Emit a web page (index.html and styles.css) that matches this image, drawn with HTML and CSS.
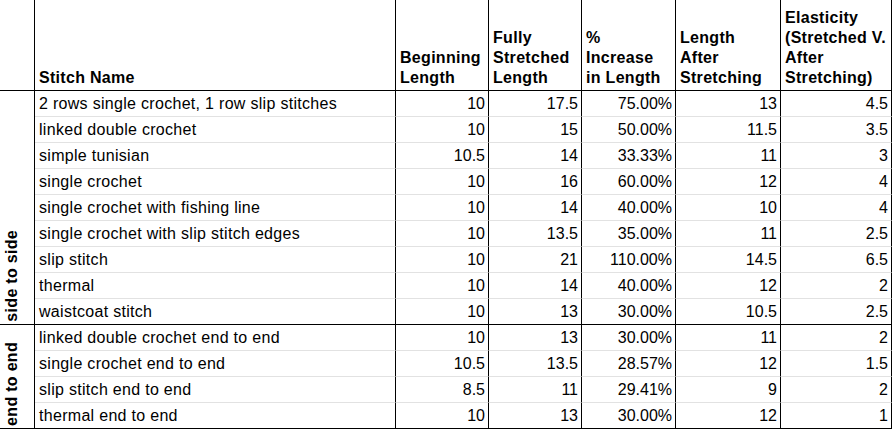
FILE: index.html
```html
<!DOCTYPE html>
<html lang="en">
<head>
<meta charset="utf-8">
<title>Stitch elasticity</title>
<link rel="stylesheet" href="styles.css">
</head>
<body>
<div class="sheet">
  <div class="row head">
    <div class="cell"></div>
    <div class="cell">Stitch Name</div>
    <div class="cell">Beginning<br>Length</div>
    <div class="cell">Fully<br>Stretched<br>Length</div>
    <div class="cell">%<br>Increase<br>in Length</div>
    <div class="cell">Length<br>After<br>Stretching</div>
    <div class="cell">Elasticity<br>(Stretched V.<br>After<br>Stretching)</div>
  </div>

  <div class="group g1"><span class="vtext">side to side</span></div>
  <div class="row"><div class="cell">2 rows single crochet, 1 row slip stitches</div><div class="cell num">10</div><div class="cell num">17.5</div><div class="cell num">75.00%</div><div class="cell num">13</div><div class="cell num">4.5</div></div>
  <div class="row"><div class="cell">linked double crochet</div><div class="cell num">10</div><div class="cell num">15</div><div class="cell num">50.00%</div><div class="cell num">11.5</div><div class="cell num">3.5</div></div>
  <div class="row"><div class="cell">simple tunisian</div><div class="cell num">10.5</div><div class="cell num">14</div><div class="cell num">33.33%</div><div class="cell num">11</div><div class="cell num">3</div></div>
  <div class="row"><div class="cell">single crochet</div><div class="cell num">10</div><div class="cell num">16</div><div class="cell num">60.00%</div><div class="cell num">12</div><div class="cell num">4</div></div>
  <div class="row"><div class="cell">single crochet with fishing line</div><div class="cell num">10</div><div class="cell num">14</div><div class="cell num">40.00%</div><div class="cell num">10</div><div class="cell num">4</div></div>
  <div class="row"><div class="cell">single crochet with slip stitch edges</div><div class="cell num">10</div><div class="cell num">13.5</div><div class="cell num">35.00%</div><div class="cell num">11</div><div class="cell num">2.5</div></div>
  <div class="row"><div class="cell">slip stitch</div><div class="cell num">10</div><div class="cell num">21</div><div class="cell num">110.00%</div><div class="cell num">14.5</div><div class="cell num">6.5</div></div>
  <div class="row"><div class="cell">thermal</div><div class="cell num">10</div><div class="cell num">14</div><div class="cell num">40.00%</div><div class="cell num">12</div><div class="cell num">2</div></div>
  <div class="row end"><div class="cell">waistcoat stitch</div><div class="cell num">10</div><div class="cell num">13</div><div class="cell num">30.00%</div><div class="cell num">10.5</div><div class="cell num">2.5</div></div>

  <div class="group g2"><span class="vtext">end to end</span></div>
  <div class="row"><div class="cell">linked double crochet end to end</div><div class="cell num">10</div><div class="cell num">13</div><div class="cell num">30.00%</div><div class="cell num">11</div><div class="cell num">2</div></div>
  <div class="row"><div class="cell">single crochet end to end</div><div class="cell num">10.5</div><div class="cell num">13.5</div><div class="cell num">28.57%</div><div class="cell num">12</div><div class="cell num">1.5</div></div>
  <div class="row"><div class="cell">slip stitch end to end</div><div class="cell num">8.5</div><div class="cell num">11</div><div class="cell num">29.41%</div><div class="cell num">9</div><div class="cell num">2</div></div>
  <div class="row end"><div class="cell">thermal end to end</div><div class="cell num">10</div><div class="cell num">13</div><div class="cell num">30.00%</div><div class="cell num">12</div><div class="cell num">1</div></div>
</div>
</body>
</html>
```

FILE: styles.css
```css
html, body {
  margin: 0;
  padding: 0;
  background: #ffffff;
}

body {
  font-family: "Liberation Sans", Arial, sans-serif;
  font-size: 16px;
  line-height: 20px;
  color: #000000;
}

.sheet {
  display: grid;
  grid-template-columns: 35px 361px 93px 93px 94px 105px 111px;
  grid-template-rows: 91px repeat(13, 26px);
}

.row {
  display: contents;
}

.cell {
  box-sizing: border-box;
  display: flex;
  align-items: flex-end;
  padding: 0 3px 2px 4px;
  border-right: 1px solid #000000;
  border-bottom: 1px solid #e2e2e2;
  white-space: nowrap;
  overflow: hidden;
  letter-spacing: 0.3px;
}

.num {
  justify-content: flex-end;
  letter-spacing: 0;
}

.head .cell {
  font-weight: bold;
  border-bottom-color: #000000;
}

.row.end .cell {
  border-bottom-color: #000000;
}

.group {
  box-sizing: border-box;
  display: flex;
  flex-direction: column;
  justify-content: flex-end;
  align-items: flex-start;
  padding: 0 0 2px 2px;
  border-right: 1px solid #000000;
  border-bottom: 1px solid #000000;
  font-weight: bold;
  letter-spacing: 0.3px;
}

.g1 {
  grid-row: span 9;
}

.g2 {
  grid-row: span 4;
}

.vtext {
  writing-mode: vertical-rl;
  transform: rotate(180deg);
  white-space: nowrap;
}
```
